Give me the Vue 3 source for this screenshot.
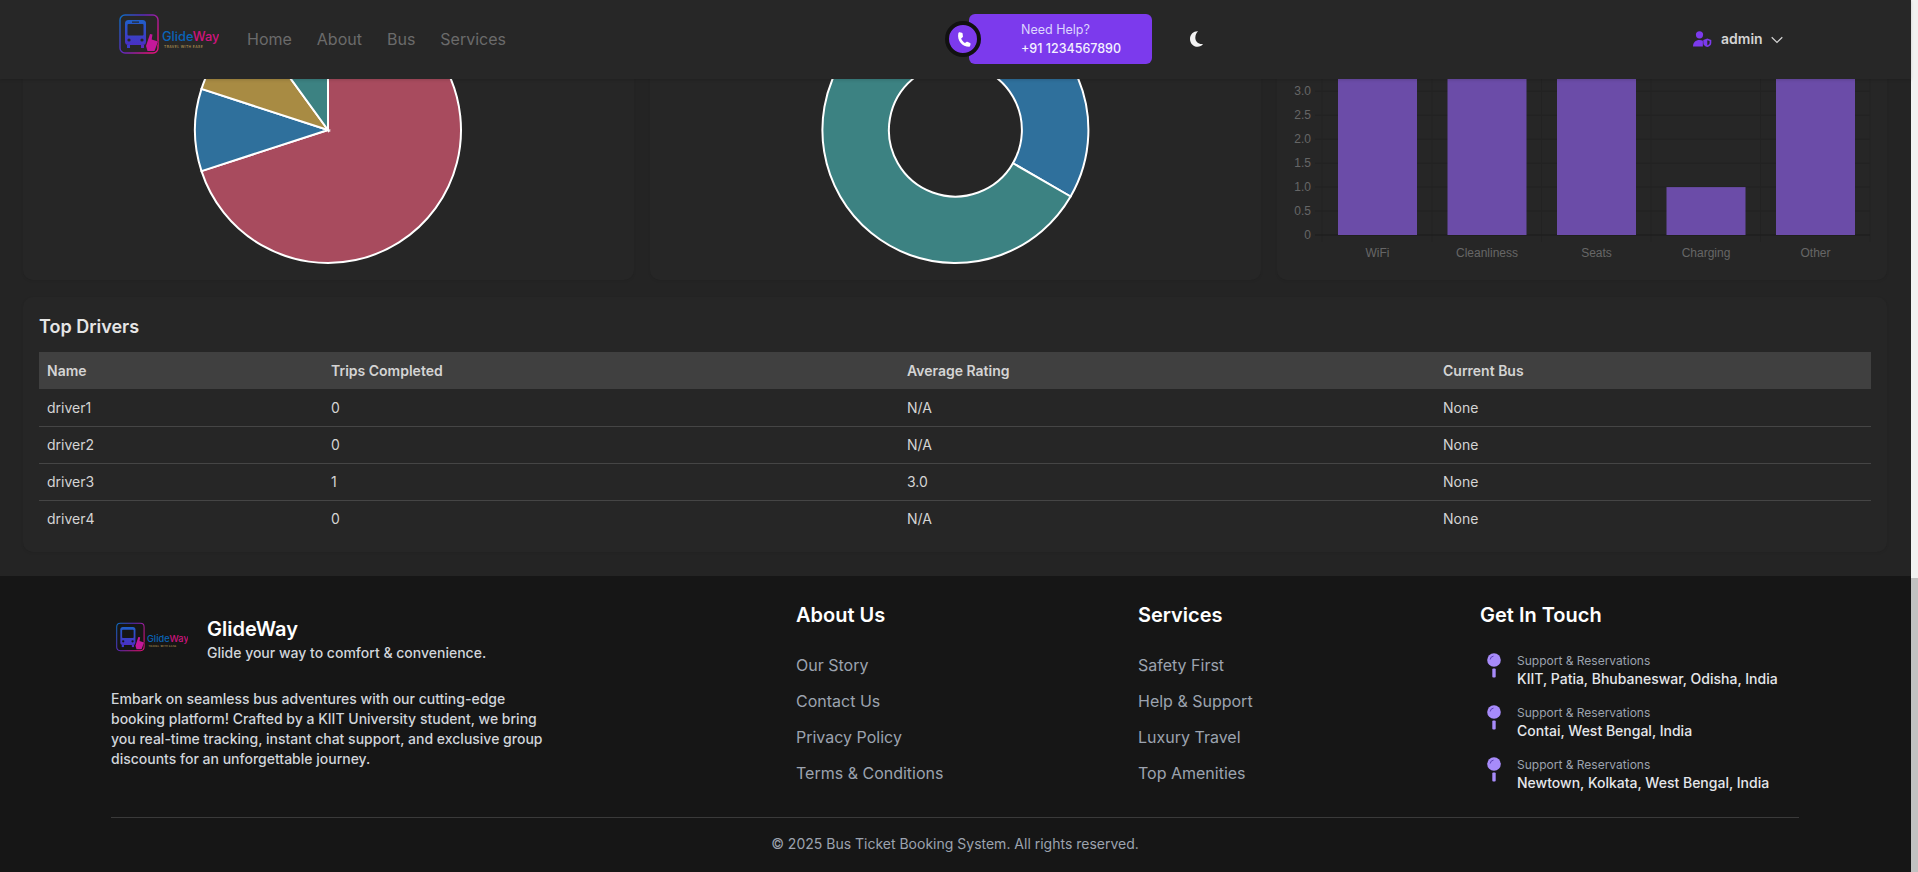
<template>
  <div class="page">
    <div class="main-col">
      <header class="topbar">
        <div class="brand">
          <svg class="logo" width="100" height="40" viewBox="0 0 100 40">
            <defs>
              <linearGradient id="logoGrad" x1="0" y1="0" x2="1" y2="0.6">
                <stop offset="0" stop-color="#0a6fc2" />
                <stop offset="0.45" stop-color="#5a2bc0" />
                <stop offset="1" stop-color="#e0127f" />
              </linearGradient>
              <linearGradient id="busGrad" x1="0" y1="0" x2="0" y2="1">
                <stop offset="0" stop-color="#1f5fc8" />
                <stop offset="1" stop-color="#4a2fc4" />
              </linearGradient>
            </defs>
            <rect x="1" y="1" width="38" height="38" rx="5" fill="none" stroke="url(#logoGrad)" stroke-width="1.4" />
            <rect x="6" y="6" width="21" height="25" rx="3.500" fill="url(#busGrad)" />
            <rect x="8.500" y="10" width="16" height="11.500" rx="1" fill="#262626" />
            <rect x="13" y="7.500" width="7" height="1.200" fill="#262626" />
            <circle cx="10" cy="26" r="1.600" fill="#262626" />
            <circle cx="23" cy="26" r="1.600" fill="#262626" />
            <rect x="8" y="31" width="3" height="3" fill="#3b3bd0" />
            <rect x="22" y="31" width="3" height="3" fill="#5a2bc0" />
            <path d="M27 32l4-12 2.500.5-.8 5 6.300 2-3.500 9.500h-7z" fill="#c4189a" stroke="#262626" stroke-width="1" paint-order="stroke" />
            <text x="43" y="27" class="logo-word"><tspan fill="#0a64b8">Glide</tspan><tspan fill="#d0147f">Way</tspan></text>
            <text x="45" y="33.500" class="logo-tag">TRAVEL WITH EASE</text>
          </svg>
        </div>
        <nav class="nav">
          <a v-for="link in navLinks" :key="link">{{ link }}</a>
        </nav>
        <div class="help">
          <span class="help-icon">
            <svg width="17" height="17" viewBox="0 0 24 24" fill="#fff">
              <path d="M6.600 1.800l3 .6c.6.1 1 .6 1.100 1.200l.5 4c.1.500-.1 1-.5 1.300l-2 1.600c1 2.700 3 5 5.400 6.500l2-1.500c.4-.3.900-.4 1.400-.2l3.700 1.500c.6.200.9.800.8 1.400l-.7 3c-.2.700-.8 1.200-1.500 1.100C10.300 22.300 2.500 13.700 4.700 3.300c.2-.9 1-1.600 1.900-1.500z" />
            </svg>
          </span>
          <div class="help-box">
            <div class="help-small">Need Help?</div>
            <div class="help-phone">+91 1234567890</div>
          </div>
        </div>
        <svg class="moon" width="14" height="16" viewBox="0 0 14 16">
          <path d="M9.500.3C5.300-.4 1 2.800 1 7.900c0 4.400 3.400 7.800 7.500 7.800 2.300 0 4.300-1 5.500-2.700-4.200.7-7.700-2.300-7.700-6.200 0-2.700 1.200-5 2.700-6.500z" fill="#f3f3f3" />
        </svg>
        <div class="user">
          <svg width="19" height="16" viewBox="0 0 19 16">
            <circle cx="6.500" cy="3.800" r="3.600" fill="#7c3aed" />
            <path d="M0 15.500c0-4 2.500-6.500 6.500-6.500 1.300 0 2.500.3 3.400.8v5.700z" fill="#7c3aed" />
            <path d="M14.300 7.500l4 1.400v3c0 2-1.700 3.500-4 4.100-2.300-.6-4-2.100-4-4.100v-3z" fill="#7c3aed" />
            <path d="M14.300 9.300l2.300.8v1.900c0 1-1 1.900-2.300 2.300z" fill="#262626" />
          </svg>
          <span class="user-name">admin</span>
          <svg class="chevron" width="12" height="8" viewBox="0 0 12 8">
            <path d="M.7 1.200L6 6.400l5.300-5.200" fill="none" stroke="#d4d4d4" stroke-width="1.200" />
          </svg>
        </div>
      </header>

      <section class="charts">
        <div class="card chart-card">
          <svg width="611" height="201" viewBox="23 79 611 201">
            <path v-for="s in pieSlices" :key="s.color" :d="s.d" :fill="s.color" stroke="#fff" stroke-width="2" />
          </svg>
        </div>
        <div class="card chart-card">
          <svg width="611" height="201" viewBox="649 79 611 201">
            <path v-for="s in ringSlices" :key="s.color" :d="s.d" :fill="s.color" stroke="#fff" stroke-width="2" />
          </svg>
        </div>
        <div class="card chart-card">
          <svg width="610" height="201" viewBox="1277 79 610 201">
            <g stroke="#222" stroke-width="1">
              <line v-for="t in yTicks" :key="t.label" x1="1315" x2="1870" :y1="t.y" :y2="t.y" />
              <line v-for="x in xLines" :key="x" :x1="x" :x2="x" y1="79" y2="242" />
            </g>
            <line x1="1315" x2="1870" y1="235" y2="235" stroke="#1c1c1c" stroke-width="1" />
            <rect v-for="b in bars" :key="b.label" :x="b.x" :y="b.y" width="79" :height="b.h" fill="#6b4ca8" />
            <text v-for="t in yTicks" :key="'l' + t.label" x="1311" :y="t.y + 4" text-anchor="end" class="axis-text">{{ t.label }}</text>
            <text v-for="b in bars" :key="'x' + b.label" :x="b.x + 39.500" y="257" text-anchor="middle" class="axis-text">{{ b.label }}</text>
          </svg>
        </div>
      </section>

      <section class="card drivers">
        <h3>Top Drivers</h3>
        <table>
          <colgroup>
            <col class="col-name" />
            <col class="col-trips" />
            <col class="col-rating" />
            <col />
          </colgroup>
          <thead>
            <tr>
              <th>Name</th>
              <th>Trips Completed</th>
              <th>Average Rating</th>
              <th>Current Bus</th>
            </tr>
          </thead>
          <tbody>
            <tr v-for="d in drivers" :key="d.name">
              <td>{{ d.name }}</td>
              <td>{{ d.trips }}</td>
              <td>{{ d.rating }}</td>
              <td>{{ d.bus }}</td>
            </tr>
          </tbody>
        </table>
      </section>

      <footer class="footer">
        <div class="footer-grid">
          <div class="about">
            <div class="about-head">
              <svg class="foot-logo" width="72" height="30" viewBox="0 0 100 40">
                <rect x="1" y="1" width="38" height="38" rx="5" fill="none" stroke="url(#logoGrad)" stroke-width="1.400" />
                <rect x="6" y="6" width="21" height="25" rx="3.500" fill="url(#busGrad)" />
                <rect x="8.500" y="10" width="16" height="11.500" rx="1" fill="#161616" />
                <circle cx="10" cy="26" r="1.600" fill="#161616" />
                <circle cx="23" cy="26" r="1.600" fill="#161616" />
                <rect x="8" y="31" width="3" height="3" fill="#3b3bd0" />
                <rect x="22" y="31" width="3" height="3" fill="#5a2bc0" />
                <path d="M27 32l4-12 2.500.5-.8 5 6.300 2-3.500 9.500h-7z" fill="#c4189a" stroke="#161616" stroke-width="1" paint-order="stroke" />
                <text x="43" y="27" class="logo-word"><tspan fill="#0a64b8">Glide</tspan><tspan fill="#d0147f">Way</tspan></text>
                <text x="45" y="33.500" class="logo-tag">TRAVEL WITH EASE</text>
              </svg>
              <div>
                <div class="foot-title">GlideWay</div>
                <div class="foot-tag">Glide your way to comfort &amp; convenience.</div>
              </div>
            </div>
            <p class="foot-desc">
              Embark on seamless bus adventures with our cutting-edge booking platform! Crafted by a KIIT University student, we bring you real-time tracking, instant chat support, and exclusive group discounts for an unforgettable journey.
            </p>
          </div>
          <div v-for="col in linkCols" :key="col.title" class="link-col">
            <h4>{{ col.title }}</h4>
            <a v-for="item in col.items" :key="item">{{ item }}</a>
          </div>
          <div class="touch">
            <h4>Get In Touch</h4>
            <div v-for="place in places" :key="place" class="place">
              <svg width="14" height="25" viewBox="0 0 14 25">
                <circle cx="7" cy="7" r="6.800" fill="#a78bfa" />
                <path d="M3.200 6.500a3.800 3.800 0 0 1 3.300-3.400" fill="none" stroke="#5b3fb5" stroke-width="1" />
                <rect x="5.300" y="15.500" width="3.400" height="9" rx="1" fill="#a78bfa" />
              </svg>
              <div>
                <div class="place-small">Support &amp; Reservations</div>
                <div class="place-main">{{ place }}</div>
              </div>
            </div>
          </div>
        </div>
        <div class="copyright">© 2025 Bus Ticket Booking System. All rights reserved.</div>
      </footer>
    </div>
    <div class="scrollbar">
      <div class="scroll-thumb"></div>
    </div>
  </div>
</template>

<script setup>
const navLinks = ['Home', 'About', 'Bus', 'Services']

// angles are clockwise from 12 o'clock, like chart.js
const pt = (cx, cy, r, deg) => {
  const a = (deg - 90) * Math.PI / 180
  return `${(cx + r * Math.cos(a)).toFixed(2)} ${(cy + r * Math.sin(a)).toFixed(2)}`
}
const arc = (cx, cy, r, r2, from, to) => {
  const large = to - from > 180 ? 1 : 0
  if (!r2) return `M${cx} ${cy}L${pt(cx, cy, r, from)}A${r} ${r} 0 ${large} 1 ${pt(cx, cy, r, to)}Z`
  return `M${pt(cx, cy, r, from)}A${r} ${r} 0 ${large} 1 ${pt(cx, cy, r, to)}L${pt(cx, cy, r2, to)}A${r2} ${r2} 0 ${large} 0 ${pt(cx, cy, r2, from)}Z`
}

const pieSlices = [
  { color: '#a84b5e', d: arc(328, 130, 133, 0, 0, 252) },
  { color: '#2f709c', d: arc(328, 130, 133, 0, 252, 288) },
  { color: '#a88b43', d: arc(328, 130, 133, 0, 288, 324) },
  { color: '#3c8282', d: arc(328, 130, 133, 0, 324, 360) }
]

const ringSlices = [
  { color: '#2f709c', d: arc(954.4, 130, 133, 66.5, 0, 120) },
  { color: '#3c8282', d: arc(954.4, 130, 133, 66.5, 120, 360) }
]

const yTicks = ['0', '0.5', '1.0', '1.5', '2.0', '2.5', '3.0'].map((label, i) => ({
  label,
  y: 235 - i * 23.95
}))
const xLines = [1322, 1432, 1541.5, 1651, 1760.5, 1870]

const bars = [
  { label: 'WiFi', value: 4 },
  { label: 'Cleanliness', value: 4 },
  { label: 'Seats', value: 4 },
  { label: 'Charging', value: 1 },
  { label: 'Other', value: 4 }
].map((b, i) => ({
  label: b.label,
  x: 1338 + i * 109.5,
  y: 235 - b.value * 47.9,
  h: b.value * 47.9
}))

const drivers = [
  { name: 'driver1', trips: 0, rating: 'N/A', bus: 'None' },
  { name: 'driver2', trips: 0, rating: 'N/A', bus: 'None' },
  { name: 'driver3', trips: 1, rating: '3.0', bus: 'None' },
  { name: 'driver4', trips: 0, rating: 'N/A', bus: 'None' }
]

const linkCols = [
  { title: 'About Us', items: ['Our Story', 'Contact Us', 'Privacy Policy', 'Terms & Conditions'] },
  { title: 'Services', items: ['Safety First', 'Help & Support', 'Luxury Travel', 'Top Amenities'] }
]

const places = [
  'KIIT, Patia, Bhubaneswar, Odisha, India',
  'Contai, West Bengal, India',
  'Newtown, Kolkata, West Bengal, India'
]
</script>

<style>
html, body {
  margin: 0;
  background: #242424;
  overflow: hidden;
}
</style>

<style scoped>
* {
  box-sizing: border-box;
}

.page {
  display: flex;
  width: 1918px;
  height: 872px;
  overflow: hidden;
  font-family: Inter, "Liberation Sans", sans-serif;
  background: #242424;
}

.main-col {
  width: 1911px;
  flex-shrink: 0;
}

.scrollbar {
  flex: 1;
  display: flex;
  flex-direction: column;
  justify-content: flex-end;
  background: #f1f1f1;
}

.scroll-thumb {
  height: 294px;
  background: #c1c1c1;
}

.topbar {
  position: relative;
  z-index: 2;
  display: flex;
  align-items: center;
  height: 79px;
  padding: 0 0 2px 119px;
  background: #272727;
  box-shadow: 0 1px 3px rgba(0, 0, 0, 0.15);
}

.brand {
  width: 128px;
  height: 50px;
  align-self: flex-start;
  margin-top: 14px;
}

.logo, .foot-logo {
  display: block;
}

.logo-word {
  font-family: Inter, sans-serif;
  font-size: 12.800px;
  font-weight: 500;
}

.logo-tag {
  font-family: Inter, sans-serif;
  font-size: 3.400px;
  font-weight: 600;
  letter-spacing: 0.4px;
  fill: #a58a50;
}

.nav {
  display: flex;
  gap: 25px;
  font-size: 16px;
  font-weight: 400;
  color: #6b6b6b;
  width: 698px;
}

.help {
  display: flex;
  align-items: center;
  width: 207px;
  height: 50px;
  margin-top: 1px;
}

.help-icon {
  position: relative;
  z-index: 1;
  display: flex;
  align-items: center;
  justify-content: center;
  width: 36px;
  height: 36px;
  margin-right: -12px;
  border: 4px solid #111;
  border-radius: 50%;
  background: #7c3aed;
  flex-shrink: 0;
}

.help-box {
  width: 183px;
  height: 50px;
  padding: 8px 0 0 52px;
  border-radius: 6px;
  background: #7c3aed;
}

.help-small {
  font-size: 12.500px;
  line-height: 16px;
  color: #ddd6fe;
}

.help-phone {
  margin-top: 2px;
  font-size: 12.500px;
  font-weight: 500;
  line-height: 18px;
  color: #f3f0ff;
}

.moon {
  margin-left: 37px;
  flex-shrink: 0;
}

.user {
  display: flex;
  align-items: center;
  margin-left: 490px;
  gap: 9px;
}

.chevron {
  margin: 2px 0 0 -1px;
}

.user-name {
  font-size: 14px;
  font-weight: 600;
  color: #d4d4d4;
}

.card {
  background: #262626;
  border-radius: 0 0 10px 10px;
  box-shadow: 0 1px 3px rgba(0, 0, 0, 0.08);
}

.charts {
  display: grid;
  grid-template-columns: 611px 611px 610px;
  gap: 16px;
  padding: 0 23px;
  height: 201px;
}

.chart-card {
  height: 201px;
  overflow: hidden;
}

.chart-card svg {
  display: block;
}

.axis-text {
  font-family: "Liberation Sans", Arial, sans-serif;
  font-size: 12px;
  fill: #666;
}

.drivers {
  margin: 17px 24px 24px 23px;
  height: 255px;
  padding: 18px 16px 16px;
  border-radius: 10px;
}

.drivers h3 {
  margin: 0 0 14px;
  font-size: 18px;
  font-weight: 600;
  line-height: 23px;
  color: #e5e5e5;
}

table {
  width: 100%;
  border-collapse: collapse;
  table-layout: fixed;
  font-size: 14px;
  color: #d4d4d4;
}

.col-name {
  width: 284px;
}

.col-trips {
  width: 576px;
}

.col-rating {
  width: 536px;
}

th {
  height: 37px;
  padding: 0 8px;
  background: #404040;
  text-align: left;
  font-weight: 600;
}

td {
  height: 37px;
  padding: 0 8px;
  border-bottom: 1px solid #454545;
}

tr:last-child td {
  border-bottom: none;
}

.footer {
  height: 296px;
  padding: 0 112px 0 111px;
  background: #161616;
}

.footer-grid {
  display: grid;
  grid-template-columns: 685px 342px 342px 1fr;
  height: 242px;
  border-bottom: 1px solid #3a3a3a;
}

.about-head {
  display: flex;
  align-items: flex-start;
  padding: 41px 0 0 5px;
  height: 98px;
}

.foot-logo {
  margin: 5px 19px 0 0;
}

.foot-title {
  font-size: 20px;
  font-weight: 600;
  line-height: 24px;
  color: #fff;
}

.foot-tag {
  margin-top: 2px;
  font-size: 14px;
  font-weight: 500;
  line-height: 20px;
  color: #d1d5db;
}

.foot-desc {
  width: 445px;
  margin: 15px 0 0;
  font-size: 14px;
  font-weight: 500;
  line-height: 20px;
  color: #d1d5db;
}

h4 {
  margin: 27px 0 26px;
  font-size: 20px;
  font-weight: 600;
  line-height: 24px;
  color: #fff;
}

.touch h4 {
  margin-bottom: 25px;
}

.link-col {
  display: flex;
  flex-direction: column;
}

.link-col a {
  height: 36px;
  line-height: 24px;
  font-size: 16px;
  color: #9ca3af;
}

.place {
  display: flex;
  gap: 16px;
  margin-left: 7px;
  height: 52px;
}

.place svg {
  flex-shrink: 0;
  margin-top: 1px;
}

.place-small {
  font-size: 12px;
  line-height: 17px;
  color: #9ca3af;
}

.place-main {
  font-size: 14px;
  font-weight: 500;
  line-height: 20px;
  color: #e5e7eb;
}

.copyright {
  padding-top: 16px;
  text-align: center;
  font-size: 14px;
  line-height: 20px;
  color: #9ca3af;
}
</style>
